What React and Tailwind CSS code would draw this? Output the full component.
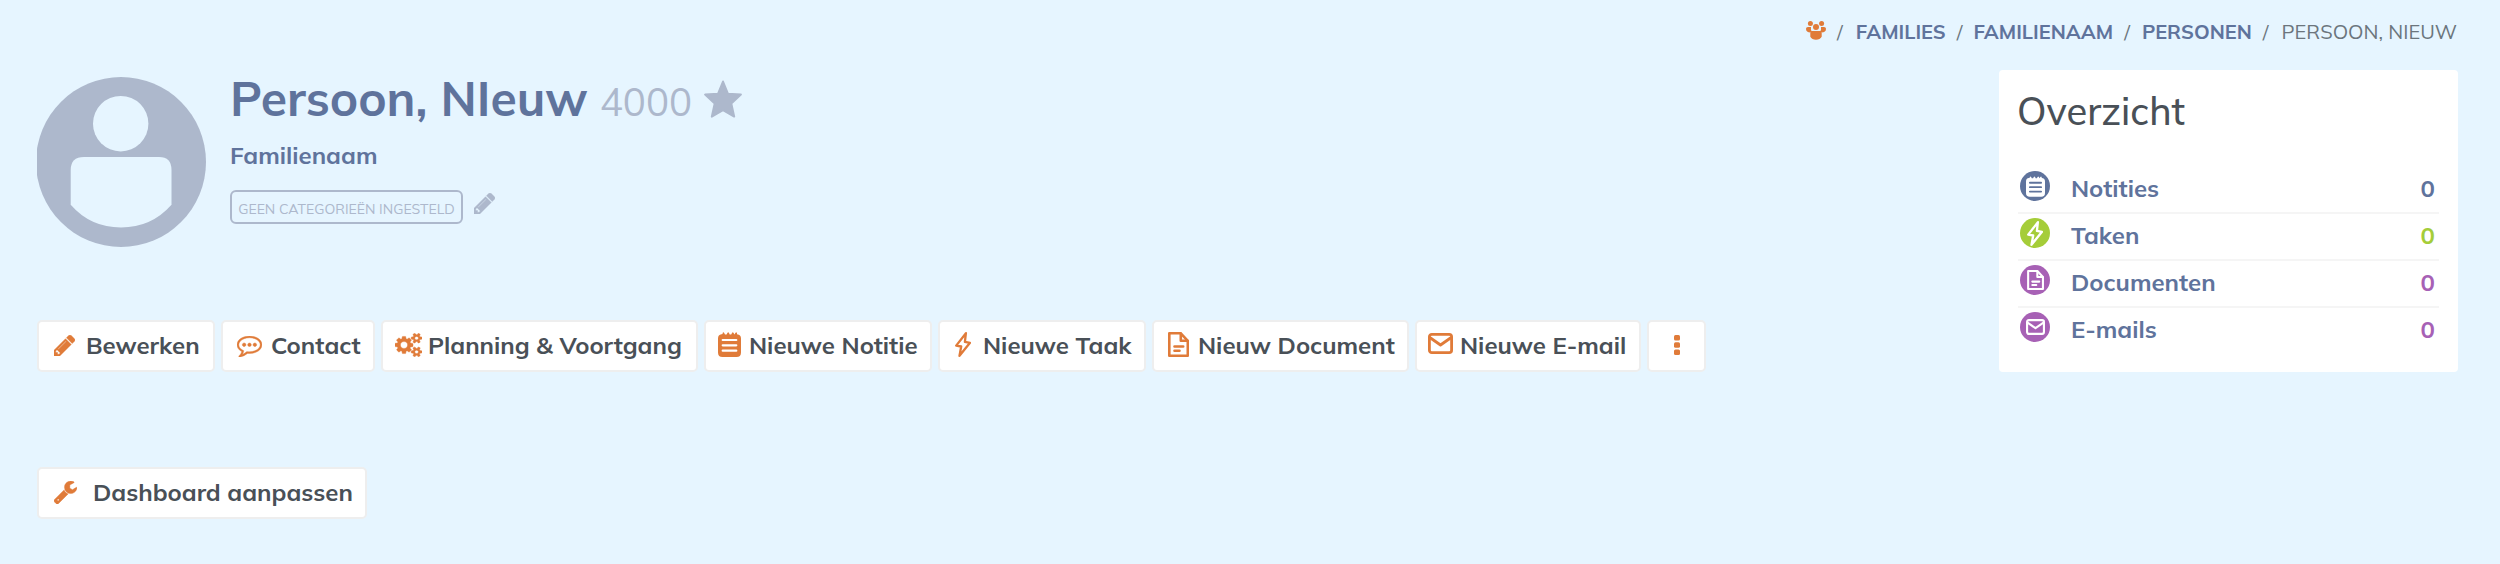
const PATHS = {
  pencil: {
    box: '128 149 1516 1516',
    d: 'M491 1536l91-91-235-235-91 91v107h128v128h107zm523-928q0-22-22-22-10 0-17 7l-542 542q-7 7-7 17 0 22 22 22 10 0 17-7l542-542q7-7 7-17zm-54-192l416 416-832 832h-416v-416zm683 96q0 53-37 90l-166 166-416-416 166-165q36-38 90-38 53 0 91 38l235 234q37 39 37 91z',
  },
  comment: {
    box: '0 256 1792 1536',
    d: 'M640 896q0 53-37.5 90.5t-90.5 37.5-90.5-37.5-37.5-90.5 37.5-90.5 90.5-37.5 90.5 37.5 37.5 90.5zm384 0q0 53-37.5 90.5t-90.5 37.5-90.5-37.5-37.5-90.5 37.5-90.5 90.5-37.5 90.5 37.5 37.5 90.5zm384 0q0 53-37.5 90.5t-90.5 37.5-90.5-37.5-37.5-90.5 37.5-90.5 90.5-37.5 90.5 37.5 37.5 90.5zm-512-512q-204 0-381.5 69.5t-282 187.5-104.5 255q0 112 71.5 213.5t201.5 175.5l87 50-27 96q-24 91-70 172 152-63 275-171l43-38 57 6q69 8 130 8 204 0 381.5-69.5t282-187.5 104.5-255-104.5-255-282-187.5-381.5-69.5zm896 512q0 174-120 321.5t-326 233-450 85.5q-70 0-145-8-198 175-460 242-49 14-114 22h-5q-15 0-27-10.5t-16-27.5v-1q-3-4-.5-12t2-10 4.5-9.5l6-9 7-8.5 8-9q7-8 31-34.5t34.5-38 31-39.5 32.5-51 27-59 26-76q-157-89-247.5-220t-90.5-281q0-130 71-248.5t191-204.5 286-136.5 348-50.5 348 50.5 286 136.5 191 204.5 71 248.5z',
  },
  cogs: {
    box: '0 0 1920 1792',
    d: 'M896 896q0-106-75-181t-181-75-181 75-75 181 75 181 181 75 181-75 75-181zm768 512q0-52-38-90t-90-38-90 38-38 90q0 53 37.5 90.5t90.5 37.5 90.5-37.5 37.5-90.5zm0-1024q0-52-38-90t-90-38-90 38-38 90q0 53 37.5 90.5t90.5 37.5 90.5-37.5 37.5-90.5zm-384 421v185q0 10-7 19.5t-16 10.5l-155 24q-11 35-32 76 34 48 90 115 7 11 7 20 0 12-7 19-23 30-82.5 89.5t-78.5 59.5q-11 0-21-7l-115-90q-37 19-77 31-11 108-23 155-7 24-30 24h-186q-11 0-20-7.5t-10-17.5l-23-153q-34-10-75-31l-118 89q-7 7-20 7-11 0-21-8-144-133-144-160 0-9 7-19 10-14 41-53t47-61q-23-44-35-82l-152-24q-10-1-17-9.5t-7-19.5v-185q0-10 7-19.5t16-10.5l155-24q11-35 32-76-34-48-90-115-7-11-7-20 0-12 7-20 22-30 82-89t79-59q11 0 21 7l115 90q34-18 77-32 11-108 23-154 7-24 30-24h186q11 0 20 7.5t10 17.5l23 153q34 10 75 31l118-89q8-7 20-7 11 0 21 8 144 133 144 160 0 8-7 19-12 16-42 54t-45 60q23 48 34 82l152 23q10 2 17 10.5t7 19.5zm640 533v140q0 16-149 31-12 27-30 52 51 113 51 138 0 4-4 7-122 71-124 71-8 0-46-47t-52-68q-20 2-30 2t-30-2q-14 21-52 68t-46 47q-2 0-124-71-4-3-4-7 0-25 51-138-18-25-30-52-149-15-149-31v-140q0-16 149-31 13-29 30-52-51-113-51-138 0-4 4-7 4-2 35-20t59-34 30-16q8 0 46 46.5t52 67.5q20-2 30-2t30 2q51-71 92-112l6-2q4 0 124 70 4 3 4 7 0 25-51 138 17 23 30 52 149 15 149 31zm0-1024v140q0 16-149 31-12 27-30 52 51 113 51 138 0 4-4 7-122 71-124 71-8 0-46-47t-52-68q-20 2-30 2t-30-2q-14 21-52 68t-46 47q-2 0-124-71-4-3-4-7 0-25 51-138-18-25-30-52-149-15-149-31v-140q0-16 149-31 13-29 30-52-51-113-51-138 0-4 4-7 4-2 35-20t59-34 30-16q8 0 46 46.5t52 67.5q20-2 30-2t30 2q51-71 92-112l6-2q4 0 124 70 4 3 4 7 0 25-51 138 17 23 30 52 149 15 149 31z',
  },
  wrench: {
    box: '85 128 1642 1644',
    d: 'M448 1472q0-26-19-45t-45-19-45 19-19 45 19 45 45 19 45-19 19-45zm644-420l-682 682q-37 37-90 37-52 0-91-37l-106-108q-38-36-38-90 0-53 38-91l681-681q39 98 114.5 173.5t173.5 114.5zm634-435q0 39-23 106-47 134-164.5 217.5t-258.5 83.5q-185 0-316.5-131.5t-131.5-316.5 131.5-316.5 316.5-131.5q58 0 121.5 16.5t107.5 46.5q16 11 16 28t-16 28l-293 169v224l193 107q5-3 79-48.5t135.5-81 70.5-35.5q15 0 23.5 10t8.5 25z',
  },
};

function Glyph({ name, className }) {
  const { box, d } = PATHS[name];
  return (
    <svg viewBox={box} className={className} fill="currentColor" stroke="currentColor" preserveAspectRatio="none">
      <path d={d} strokeWidth="30" />
    </svg>
  );
}

function NoteIcon({ className, line }) {
  return (
    <svg viewBox="0 0 23 25" className={className}>
      <path
        fill="currentColor"
        d="M3.5 2.2L4.6 2V1q.8-1.3 1.6 0L7 2.4h1.6L9.4 1q.8-1.3 1.600 0l.7 1.400h1.500L14 1q.8-1.300 1.600 0l.7 1.400L17.400 1q.8-1.300 1.600 0v1.200q4 .3 4 4.300v14q0 4.500-4.500 4.500h-14Q0 25 0 20.500V6.500Q0 2.500 3.500 2.200z"
      />
      <path className={line} strokeWidth="2.200" strokeLinecap="round" fill="none" d="M4.700 8h13.600M4.700 13.300h13.600M4.700 18.700h13.600" />
    </svg>
  );
}

function BoltIcon({ className }) {
  return (
    <svg viewBox="0 0 16 25" className={className} fill="none" stroke="currentColor" strokeWidth="2.300" strokeLinejoin="round">
      <path d="M10.900 1.200L1.200 13.600l5 .9-1.700 9.300L15 10.800l-5.100-1z" />
    </svg>
  );
}

function DocIcon({ className }) {
  return (
    <svg viewBox="0 0 21 25" className={className} fill="none" stroke="currentColor" strokeWidth="2.600" strokeLinejoin="round" strokeLinecap="round">
      <path d="M1.300 1.300h11.500l7 7.500v14.900H1.300z" />
      <path d="M12.800 1.500v7.300h6.700" />
      <path d="M6.500 14.500h8.700M6.500 18.800h5" />
    </svg>
  );
}

function MailIcon({ className }) {
  return (
    <svg viewBox="0 0 25 21" className={className} fill="none" stroke="currentColor" strokeWidth="2.800" strokeLinejoin="round" strokeLinecap="round">
      <rect x="1.400" y="1.400" width="22.200" height="18.200" rx="2.400" />
      <path d="M2.500 5l10 7 10-7" />
    </svg>
  );
}

function GroupIcon() {
  return (
    <svg viewBox="0 0 20 19" className="h-[19px] w-[20px] text-[#e07b39]" fill="currentColor">
      <circle cx="4.400" cy="2.600" r="2.500" />
      <circle cx="15.600" cy="2.600" r="2.500" />
      <path d="M0 7.800q0-1.900 2-1.900h3q-.6 2.900 1.200 5H4.500V11.600Q0 11.600 0 7.800zM20 7.800q0-1.900-2-1.900h-3q.6 2.900-1.200 5h1.700v.7Q20 11.600 20 7.800z" />
      <circle cx="10" cy="6.100" r="3" />
      <path d="M6 9.900h8q1.700 0 1.700 1.700v4.200Q14 18.800 10 18.800T4.300 15.800v-4.200q0-1.700 1.700-1.700z" />
    </svg>
  );
}

function Button({ width, pad, gap, icon, children }) {
  return (
    <button className={`flex h-[52px] shrink-0 items-center rounded-[5px] border-2 border-[#eeeeee] bg-white pb-[2px] text-[24px] leading-[30px] font-bold whitespace-nowrap text-[#495057] ${width} ${pad}`}>
      <span className={`flex shrink-0 text-[#e07b39] ${gap}`}>{icon}</span>
      {children}
    </button>
  );
}

const circle = 'flex size-[30px] shrink-0 items-center justify-center rounded-full text-white';

const STATS = [
  { label: 'Notities', color: 'text-[#5f739c]', icon: <span className={`${circle} bg-[#5f739c]`}><NoteIcon className="h-[21px] w-[19px]" line="stroke-[#5f739c]" /></span> },
  { label: 'Taken', color: 'text-[#a5cd39]', icon: <span className={`${circle} bg-[#a5cd39]`}><BoltIcon className="h-[25px] w-[16px]" /></span> },
  { label: 'Documenten', color: 'text-[#a761b5]', icon: <span className={`${circle} bg-[#a761b5]`}><DocIcon className="h-[20px] w-[17px]" /></span> },
  { label: 'E-mails', color: 'text-[#a761b5]', icon: <span className={`${circle} bg-[#a761b5]`}><MailIcon className="h-[16px] w-[19px]" /></span> },
];

export default function App() {
  return (
    <div className="h-[564px] w-[2500px] overflow-hidden bg-[#e6f5ff] pr-[42px] pl-[37px] font-['Mulish','Lato',sans-serif]">
      <nav className="flex h-[70px] items-start justify-end pt-[19px] text-[20px] leading-[26px] whitespace-pre text-[#6c757d]">
        <div className="flex">
          <span className="mt-[2px] mr-[11px]"><GroupIcon /></span>
          <span className="mr-[13px]">/</span>
          <a className="mr-[11px] font-bold text-[#5f739c]">FAMILIES</a>
          <span className="mr-[11px]">/</span>
          <a className="mr-[11px] font-bold text-[#5f739c]">FAMILIENAAM</a>
          <span className="mr-[12px]">/</span>
          <a className="mr-[11px] font-bold text-[#5f739c]">PERSONEN</a>
          <span className="mr-[13px]">/</span>
          <span className="mr-[1px]">PERSOON, NIEUW</span>
        </div>
      </nav>

      <div className="flex justify-between">
        <main className="flex flex-col">
          <header className="flex h-[250px]">
            <svg viewBox="0 0 170 170" className="mt-[7px] mr-[23px] h-[170px] w-[170px]">
              <circle cx="84" cy="85" r="85" fill="#adb8cc" />
              <circle cx="83.700" cy="46.700" r="27.700" fill="#e6f5ff" />
              <path fill="#e6f5ff" d="M47 80h75q12.500 0 12.500 13v34.700q-20 22.700-50.500 22.700T33.700 127.700V93Q33.700 80 47 80z" />
            </svg>
            <div>
              <h1 className="flex h-[60px] text-[48px] leading-[56px] font-bold text-[#5f739c]">
                Persoon, NIeuw
                <span className="ml-[12px] pt-[4px] text-[38.5px] font-normal text-[#adb8cc]">4000</span>
                <svg viewBox="0 0 38 38" className="mt-[10px] ml-[12px] size-[38px]">
                  <path
                    fill="#adb8cc"
                    stroke="#adb8cc"
                    strokeWidth="2"
                    strokeLinejoin="round"
                    d="M19 1.500l4.900 12.200 13 .9-9.600 8.800 2.900 13.200L19 30.200 7.800 36.600l2.900-13.200L1.100 14.600l13-.9z"
                  />
                </svg>
              </h1>
              <div className="mt-[10px] text-[24px] leading-[30px] font-bold text-[#5f739c]">Familienaam</div>
              <div className="mt-[20px] flex">
                <span className="flex h-[34px] w-[233px] items-center justify-center rounded-[6px] border-2 border-[#adb8cc] pt-[4px] text-[14px] whitespace-nowrap text-[#adb8cc]">
                  GEEN CATEGORIEËN INGESTELD
                </span>
                <Glyph name="pencil" className="mt-[3px] ml-[11px] size-[21px] text-[#adb8cc]" />
              </div>
            </div>
          </header>

          <div className="flex gap-[6px]">
            <Button width="w-[178px]" pad="pl-[15px]" gap="mr-[11px]" icon={<Glyph name="pencil" className="size-[21px]" />}>Bewerken</Button>
            <Button width="w-[154px]" pad="pl-[14px]" gap="mr-[9px] mt-[3px]" icon={<Glyph name="comment" className="h-[21px] w-[25px]" />}>Contact</Button>
            <Button width="w-[317px]" pad="pl-[12px]" gap="mr-[6px]" icon={<Glyph name="cogs" className="h-[24px] w-[27px]" />}>Planning &amp; Voortgang</Button>
            <Button width="w-[228px]" pad="pl-[12px]" gap="mr-[8px] mb-[2px]" icon={<NoteIcon className="h-[25px] w-[23px]" line="stroke-white" />}>Nieuwe Notitie</Button>
            <Button width="w-[208px]" pad="pl-[15px]" gap="mr-[12px] mb-[2px]" icon={<BoltIcon className="h-[25px] w-[16px]" />}>Nieuwe Taak</Button>
            <Button width="w-[257px]" pad="pl-[14px]" gap="mr-[9px] mb-[2px]" icon={<DocIcon className="h-[25px] w-[21px]" />}>Nieuw Document</Button>
            <Button width="w-[226px]" pad="pl-[11px]" gap="mr-[7px] mb-[3px]" icon={<MailIcon className="h-[21px] w-[25px]" />}>Nieuwe E-mail</Button>
            <Button
              width="w-[59px]"
              pad="justify-center"
              gap=""
              icon={
                <svg viewBox="0 0 6 20" className="h-[20px] w-[6px]" fill="currentColor">
                  <rect width="6" height="5.500" rx="1.500" />
                  <rect y="7.200" width="6" height="5.500" rx="1.500" />
                  <rect y="14.400" width="6" height="5.500" rx="1.500" />
                </svg>
              }
            />
          </div>

          <div className="mt-[95px] flex">
            <Button width="w-[330px]" pad="pl-[15px]" gap="mr-[16px]" icon={<Glyph name="wrench" className="size-[23px]" />}>Dashboard aanpassen</Button>
          </div>
        </main>

        <aside className="h-[302px] w-[459px] rounded-[4px] bg-white pt-[17px] pr-[19px] pl-[18px]">
          <h2 className="text-[38px] leading-[48px] font-medium text-[#495057]">Overzicht</h2>
          <ul className="mt-[32px] ml-[1px]">
            {STATS.map((s) => (
              <li key={s.label} className="flex h-[47px] border-b-2 border-[#f5f5f5] pt-[4px] pl-[2px] last:border-b-0">
                {s.icon}
                <span className="ml-[21px] flex-1 text-[24px] leading-[34px] font-bold text-[#5f739c]">{s.label}</span>
                <span className={`pr-[4px] text-[24px] leading-[34px] font-bold ${s.color}`}>0</span>
              </li>
            ))}
          </ul>
        </aside>
      </div>
    </div>
  );
}
